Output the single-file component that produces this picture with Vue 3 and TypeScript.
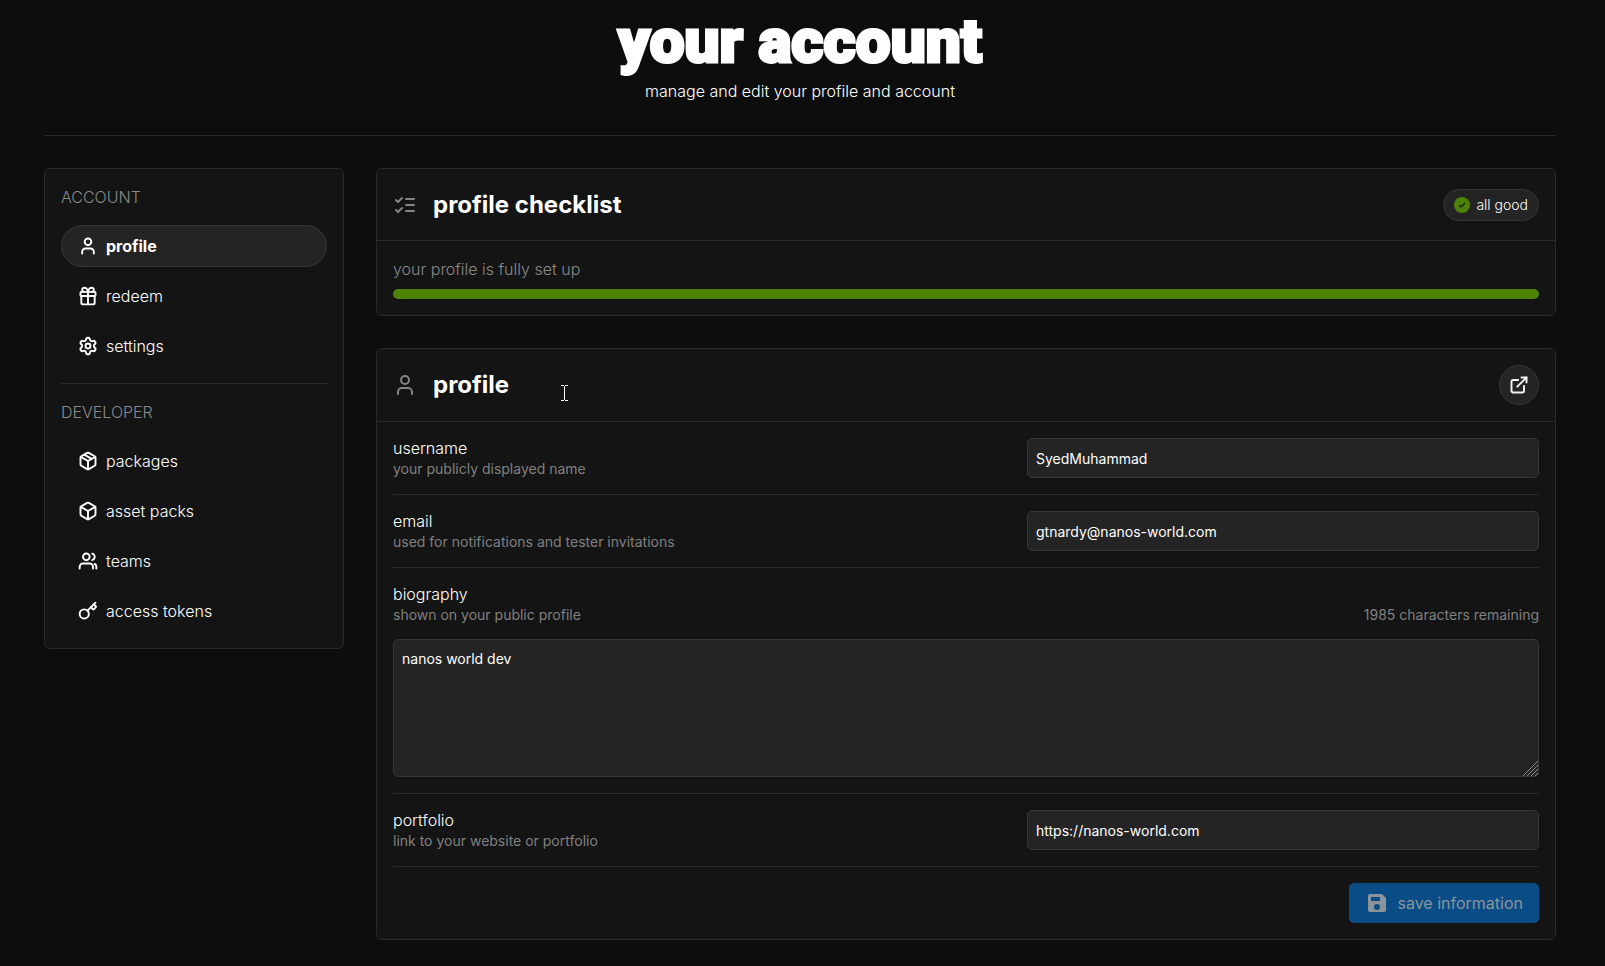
<script setup lang="ts">
import { computed, ref } from 'vue'

interface NavItem {
  label: string
  active?: boolean
  paths: string[]
}

interface NavGroup {
  title: string
  items: NavItem[]
}

const userPaths = [
  'M19 21v-2a4 4 0 0 0-4-4H9a4 4 0 0 0-4 4v2',
  'M8 7a4 4 0 1 0 8 0a4 4 0 1 0-8 0',
]
const cubePaths = [
  'M21 8a2 2 0 0 0-1-1.73l-7-4a2 2 0 0 0-2 0l-7 4A2 2 0 0 0 3 8v8a2 2 0 0 0 1 1.73l7 4a2 2 0 0 0 2 0l7-4A2 2 0 0 0 21 16Z',
  'm3.3 7 8.7 5 8.7-5',
  'M12 22V12',
]

const groups: NavGroup[] = [
  {
    title: 'ACCOUNT',
    items: [
      { label: 'profile', active: true, paths: userPaths },
      {
        label: 'redeem',
        paths: [
          'M4 7h16a1 1 0 0 1 1 1v3a1 1 0 0 1-1 1H4a1 1 0 0 1-1-1V8a1 1 0 0 1 1-1z',
          'M12 7v15',
          'M20 12v8a2 2 0 0 1-2 2H6a2 2 0 0 1-2-2v-8',
          'M7.5 7a2.5 2.5 0 0 1 0-5C10 2 11.5 4 12 7c.5-3 2-5 4.5-5a2.5 2.5 0 0 1 0 5',
        ],
      },
      {
        label: 'settings',
        paths: [
          'M9.671 4.136a2.34 2.34 0 0 1 4.659 0 2.34 2.34 0 0 0 3.319 1.915 2.34 2.34 0 0 1 2.33 4.033 2.34 2.34 0 0 0 0 3.831 2.34 2.34 0 0 1-2.33 4.033 2.34 2.34 0 0 0-3.319 1.915 2.34 2.34 0 0 1-4.659 0 2.34 2.34 0 0 0-3.32-1.915 2.34 2.34 0 0 1-2.33-4.033 2.34 2.34 0 0 0 0-3.831A2.34 2.34 0 0 1 6.35 6.051a2.34 2.34 0 0 0 3.319-1.915',
          'M9 12a3 3 0 1 0 6 0a3 3 0 1 0-6 0',
        ],
      },
    ],
  },
  {
    title: 'DEVELOPER',
    items: [
      { label: 'packages', paths: [...cubePaths, 'm7.5 4.27 9 5.15'] },
      { label: 'asset packs', paths: cubePaths },
      {
        label: 'teams',
        paths: [
          'M18 21v-2a4 4 0 0 0-4-4H6a4 4 0 0 0-4 4v2',
          'M6 7a4 4 0 1 0 8 0a4 4 0 1 0-8 0',
          'M22 21v-2a4 4 0 0 0-2-3.5',
          'M17 3.13a4 4 0 0 1 0 7.75',
        ],
      },
      {
        label: 'access tokens',
        paths: [
          'm15.5 7.5 2.3 2.3a1 1 0 0 0 1.4 0l2.1-2.1a1 1 0 0 0 0-1.4L19 4',
          'm21 2-9.6 9.6',
          'M2 15.5a5.5 5.5 0 1 0 11 0a5.5 5.5 0 1 0-11 0',
        ],
      },
    ],
  },
]

const username = ref('SyedMuhammad')
const email = ref('gtnardy@nanos-world.com')
const biography = ref('nanos world dev')
const portfolio = ref('https://nanos-world.com')
const progress = ref(100)
const remaining = computed(() => 2000 - biography.value.length)
</script>

<template>
  <div class="page">
    <header class="hero">
      <h1>your account</h1>
      <p>manage and edit your profile and account</p>
    </header>

    <div class="columns">
      <nav class="card sidebar" aria-label="Account">
        <section v-for="group in groups" :key="group.title" class="group">
          <h2 class="group-title">{{ group.title }}</h2>
          <a
            v-for="item in group.items"
            :key="item.label"
            href="#"
            class="nav-item"
            :class="{ active: item.active }"
          >
            <svg class="icon" viewBox="0 0 24 24" aria-hidden="true">
              <path v-for="d in item.paths" :key="d" :d="d" />
            </svg>
            <span>{{ item.label }}</span>
          </a>
        </section>
      </nav>

      <main class="main">
        <section class="card">
          <div class="card-head checklist-head">
            <svg class="icon large" viewBox="0 0 24 24" aria-hidden="true">
              <path d="m3 17 2 2 4-4" />
              <path d="m3 7 2 2 4-4" />
              <path d="M13 6h8" />
              <path d="M13 12h8" />
              <path d="M13 18h8" />
            </svg>
            <h2>profile checklist</h2>
            <span class="badge">
              <svg viewBox="0 0 16 16" aria-hidden="true">
                <circle cx="8" cy="8" r="8" />
                <path d="m5 8 2 2 4-4" />
              </svg>
              all good
            </span>
          </div>
          <div class="checklist-body">
            <p>your profile is fully set up</p>
            <div class="track">
              <div class="fill" :style="{ width: progress + '%' }"></div>
            </div>
          </div>
        </section>

        <section class="card">
          <div class="card-head">
            <svg class="icon large" viewBox="0 0 24 24" aria-hidden="true">
              <path v-for="d in userPaths" :key="d" :d="d" />
            </svg>
            <h2>profile</h2>
            <a href="#" class="round" aria-label="open public profile">
              <svg class="icon" viewBox="0 0 24 24" aria-hidden="true">
                <path d="M15 3h6v6" />
                <path d="M10 14 21 3" />
                <path d="M18 13v6a2 2 0 0 1-2 2H5a2 2 0 0 1-2-2V8a2 2 0 0 1 2-2h6" />
              </svg>
            </a>
          </div>

          <form class="form" @submit.prevent>
            <div class="row">
              <label for="username">
                <span class="name">username</span>
                <span class="hint">your publicly displayed name</span>
              </label>
              <input id="username" v-model="username" type="text" />
            </div>
            <div class="row">
              <label for="email">
                <span class="name">email</span>
                <span class="hint">used for notifications and tester invitations</span>
              </label>
              <input id="email" v-model="email" type="email" />
            </div>
            <div class="row stacked">
              <div class="bio-head">
                <label for="biography">
                  <span class="name">biography</span>
                  <span class="hint">shown on your public profile</span>
                </label>
                <span class="hint">{{ remaining }} characters remaining</span>
              </div>
              <div class="bio-box">
                <textarea id="biography" v-model="biography" spellcheck="false"></textarea>
                <svg class="grip" viewBox="0 0 15 15" aria-hidden="true">
                  <path d="M0 15 15 0M4 15 15 4M8 15 15 8M12 15 15 12" />
                </svg>
              </div>
            </div>
            <div class="row">
              <label for="portfolio">
                <span class="name">portfolio</span>
                <span class="hint">link to your website or portfolio</span>
              </label>
              <input id="portfolio" v-model="portfolio" type="url" />
            </div>
            <div class="actions">
              <button type="submit" class="save" disabled>
                <svg viewBox="0 0 24 24" aria-hidden="true">
                  <path
                    fill-rule="evenodd"
                    d="M5 3h12l4 4v12a2 2 0 0 1-2 2H5a2 2 0 0 1-2-2V5a2 2 0 0 1 2-2zM6 6v4h9V6zM12 13a3 3 0 1 0 0 6a3 3 0 0 0 0-6z"
                  />
                </svg>
                save information
              </button>
            </div>
          </form>
        </section>
      </main>
    </div>

    <svg class="pointer" viewBox="0 0 7 16" aria-hidden="true">
      <path d="M0 .5h3M4 .5h3M3.5 1v14M0 15.5h3M4 15.5h3" />
    </svg>
  </div>
</template>

<style>
body {
  background: #0d0d0d;
}
</style>

<style scoped>
* {
  box-sizing: border-box;
}

.page {
  position: relative;
  padding: 0 49px 26px 44px;
  color: #fff;
  font-family: Inter, 'Liberation Sans', sans-serif;
  font-size: 16px;
  font-weight: 300;
  line-height: 24px;
}

h1,
h2,
p {
  margin: 0;
}

.hero {
  display: flex;
  flex-direction: column;
  align-items: center;
  padding: 3px 0 32px;
  border-bottom: 1px solid #2a2a2a;
  margin-bottom: 32px;
}

.hero h1 {
  font-family: Roboto, 'Liberation Sans', sans-serif;
  font-size: 62px;
  font-weight: 900;
  line-height: 76px;
  color: #fff;
  -webkit-text-stroke: 3px #fff;
}

.columns {
  display: grid;
  grid-template-columns: 300px minmax(0, 1fr);
  gap: 32px;
  align-items: start;
}

.card {
  background: #141414;
  border: 1px solid #2a2a2a;
  border-radius: 6px;
}

.icon {
  flex: none;
  width: 20px;
  height: 20px;
  fill: none;
  stroke: currentColor;
  stroke-width: 2.3;
  stroke-linecap: round;
  stroke-linejoin: round;
}

.icon.large {
  width: 24px;
  height: 24px;
  stroke-width: 2;
  color: #858585;
}

.sidebar {
  padding: 16px;
}

.group {
  display: flex;
  flex-direction: column;
  gap: 8px;
}

.group + .group {
  margin-top: 16px;
  padding-top: 16px;
  border-top: 1px solid #2a2a2a;
}

.group-title {
  margin-bottom: 8px;
  font-size: 16px;
  font-weight: 300;
  color: #8a8a8a;
}

.nav-item {
  display: flex;
  align-items: center;
  gap: 8px;
  padding: 8px 16px;
  border: 1px solid transparent;
  border-radius: 21px;
  color: #fff;
  text-decoration: none;
}

.nav-item.active {
  background: #242424;
  border-color: #363636;
  color: #fff;
  font-weight: 700;
}

.main {
  display: grid;
  gap: 32px;
}

.card-head {
  display: flex;
  align-items: center;
  gap: 16px;
  min-height: 73px;
  padding: 0 16px;
  border-bottom: 1px solid #2a2a2a;
}

.checklist-head {
  min-height: 72px;
}

.card-head h2 {
  flex: 1;
  font-size: 24px;
  font-weight: 700;
  line-height: 36px;
  color: #fff;
}

.badge {
  display: flex;
  align-items: center;
  gap: 6px;
  height: 32px;
  padding: 0 10px;
  background: #242424;
  border: 1px solid #363636;
  border-radius: 16px;
  font-size: 14px;
}

.badge svg {
  width: 16px;
  height: 16px;
  fill: #4d8205;
}

.badge path {
  fill: none;
  stroke: #142400;
  stroke-width: 1.5;
}

.checklist-body {
  display: grid;
  gap: 8px;
  padding: 16px;
  color: #8a8a8a;
}

.track {
  height: 10px;
  overflow: hidden;
  background: #242424;
  border-radius: 5px;
}

.fill {
  height: 100%;
  background: #4d8205;
}

.round {
  display: grid;
  place-items: center;
  width: 40px;
  height: 40px;
  background: #242424;
  border: 1px solid #363636;
  border-radius: 50%;
  color: #f2f2f2;
}

.form {
  padding: 0 16px;
}

.row {
  display: flex;
  align-items: center;
  justify-content: space-between;
  gap: 14px;
  padding: 15px 0;
  border-bottom: 1px solid #2a2a2a;
}

.row.stacked {
  flex-direction: column;
  align-items: stretch;
  padding-bottom: 16px;
}

label {
  display: grid;
}

.name {
  line-height: 22px;
}

.hint {
  font-size: 14px;
  font-weight: 400;
  line-height: 20px;
  color: #808080;
}

.bio-head {
  display: flex;
  align-items: end;
  justify-content: space-between;
}

input,
textarea {
  background: #242424;
  border: 1px solid #363636;
  border-radius: 5px;
  color: #fff;
  font-family: inherit;
  font-size: 14px;
  font-weight: 400;
  line-height: 20px;
}

input {
  width: 512px;
  height: 40px;
  padding: 0 8px;
}

.bio-box {
  position: relative;
  display: grid;
}

textarea {
  height: 138px;
  padding: 9px 8px;
  resize: vertical;
}

textarea::-webkit-resizer {
  display: none;
}

.grip {
  position: absolute;
  right: 1px;
  bottom: 1px;
  width: 15px;
  height: 15px;
  fill: none;
  stroke: #8c8c8c;
  pointer-events: none;
}

.actions {
  display: flex;
  justify-content: flex-end;
  padding: 16px 0;
}

.save {
  display: flex;
  align-items: center;
  gap: 8px;
  height: 40px;
  padding: 0 16px;
  background: #0a4c86;
  border: 0;
  border-radius: 5px;
  color: #8b939b;
  font-family: inherit;
  font-size: 16px;
  font-weight: 400;
}

.save svg {
  width: 24px;
  height: 24px;
  fill: currentColor;
}

.pointer {
  position: absolute;
  left: 561px;
  top: 385px;
  width: 7px;
  height: 16px;
  fill: none;
  stroke: #fff;
  pointer-events: none;
}
</style>
